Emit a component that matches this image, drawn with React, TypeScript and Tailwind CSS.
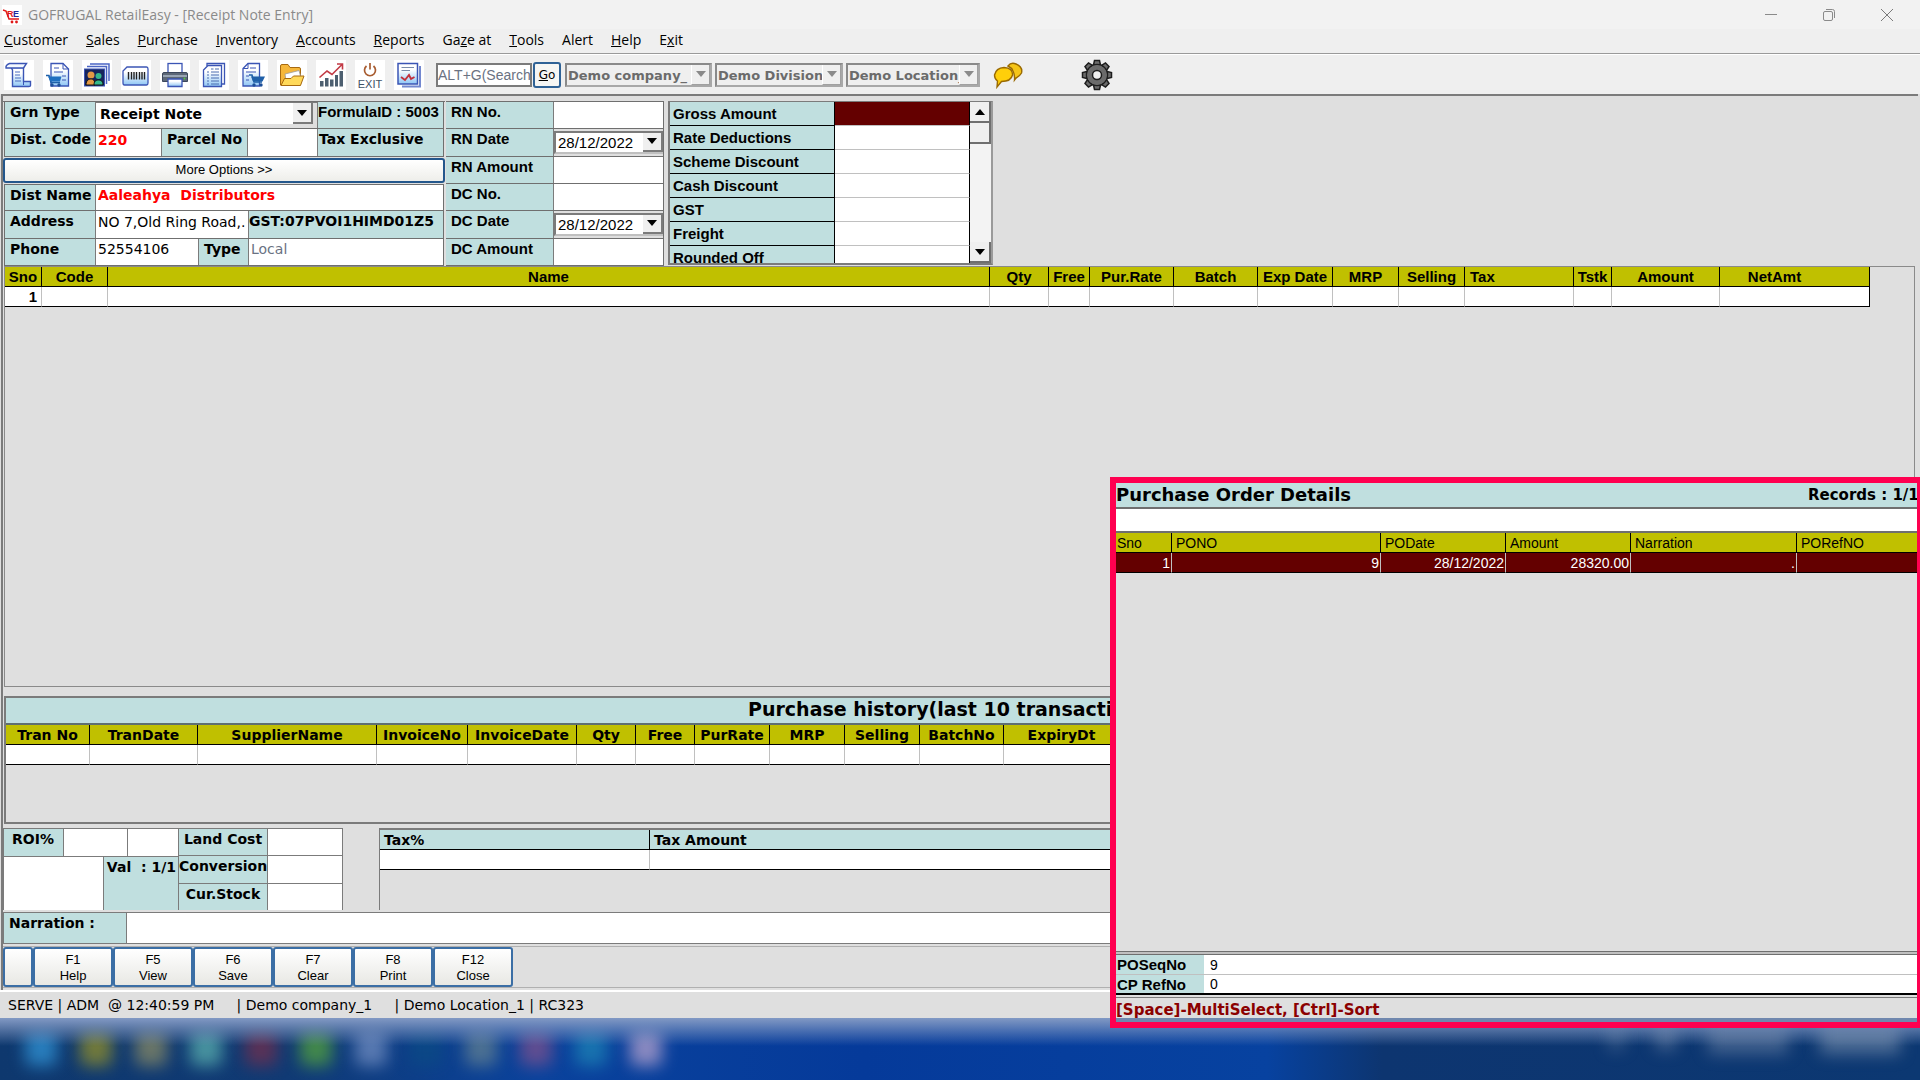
import type { ReactNode } from "react";
import { clsx } from "clsx";

const menuItems = [
  ["", "C", "ustomer"],
  ["", "S", "ales"],
  ["", "P", "urchase"],
  ["", "I", "nventory"],
  ["", "A", "ccounts"],
  ["", "R", "eports"],
  ["Ga", "z", "e at"],
  ["", "T", "ools"],
  ["Alert", "", ""],
  ["", "H", "elp"],
  ["E", "x", "it"],
];

const itemColumns = [
  { name: "Sno", width: "w-[37px]" },
  { name: "Code", width: "w-[66px]" },
  { name: "Name", width: "" },
  { name: "Qty", width: "w-[59px]" },
  { name: "Free", width: "w-[41px]" },
  { name: "Pur.Rate", width: "w-[84px]" },
  { name: "Batch", width: "w-[84px]" },
  { name: "Exp Date", width: "w-[75px]" },
  { name: "MRP", width: "w-[66px]" },
  { name: "Selling", width: "w-[66px]" },
  { name: "Tax", width: "w-[109px]", align: "pl-[5px] text-left" },
  { name: "Tstk", width: "w-[38px]" },
  { name: "Amount", width: "w-[108px]" },
  { name: "NetAmt", width: "w-[150px]", align: "pr-10 text-center" },
];

const historyColumns = [
  { name: "Tran No", width: "w-[84px]" },
  { name: "TranDate", width: "w-[108px]" },
  { name: "SupplierName", width: "w-[179px]" },
  { name: "InvoiceNo", width: "w-[91px]" },
  { name: "InvoiceDate", width: "w-[109px]" },
  { name: "Qty", width: "w-[59px]" },
  { name: "Free", width: "w-[59px]" },
  { name: "PurRate", width: "w-[75px]" },
  { name: "MRP", width: "w-[75px]" },
  { name: "Selling", width: "w-[75px]" },
  { name: "BatchNo", width: "w-[84px]" },
  { name: "ExpiryDt", width: "w-[116px]" },
  { name: "", width: "" },
];

const orderColumns = [
  { name: "Sno", value: "1", width: "w-[56px]" },
  { name: "PONO", value: "9", width: "w-[209px]" },
  { name: "PODate", value: "28/12/2022", width: "w-[125px]" },
  { name: "Amount", value: "28320.00", width: "w-[125px]" },
  { name: "Narration", value: ".", width: "w-[166px]" },
  { name: "PORefNO", value: "", width: "" },
];

const charges = [
  "Gross Amount",
  "Rate Deductions",
  "Scheme Discount",
  "Cash Discount",
  "GST",
  "Freight",
  "Rounded Off",
];

const functionKeys = [
  ["F1", "Help"],
  ["F5", "View"],
  ["F6", "Save"],
  ["F7", "Clear"],
  ["F8", "Print"],
  ["F12", "Close"],
];

const taskbarSpots = [
  "bg-[#2f8fd0]",
  "bg-[#8a8a2e]",
  "bg-[#808566]",
  "bg-[#55a8aa]",
  "bg-[#6b3050]",
  "bg-[#4f9c40]",
  "bg-[#6a88bd]",
  "bg-[#0b4a85]",
  "bg-[#5c7c92]",
  "bg-[#75508e]",
  "bg-[#1c7fb4]",
  "bg-[#aa9cca]",
];

const sans = "font-['Liberation_Sans',Arial,sans-serif]";

function Arrow({ up = false, className = "fill-black" }: { up?: boolean; className?: string }) {
  return (
    <svg viewBox="0 0 10 6" className={clsx("h-[6px] w-[10px]", className)}>
      <path d={up ? "M0 6 L5 0 L10 6Z" : "M0 0 L5 6 L10 0Z"} />
    </svg>
  );
}

function ToolIcon({ label, children }: { label: string; children: ReactNode }) {
  return (
    <button type="button" aria-label={label} className="h-[30px] w-[30px] bg-white">
      <svg viewBox="0 0 30 30" className="h-[30px] w-[30px]">
        {children}
      </svg>
    </button>
  );
}

function Toolbar() {
  return (
    <div className="flex h-10 items-center border-t border-white bg-[#efefef] pl-1">
      <svg className="absolute h-0 w-0">
        <defs>
          <linearGradient id="paper" x1="0" y1="0" x2="0" y2="1">
            <stop offset="0.3" stopColor="#fff" />
            <stop offset="1" stopColor="#8fc6f5" />
          </linearGradient>
        </defs>
      </svg>
      <div className="flex gap-[9px]">
        <ToolIcon label="Bill">
          <path d="M7 7.500H19.500V21.500H26.500V25.500Q26.500 26.500 25 26.500H8.500V10Z" fill="url(#paper)" stroke="#3b55b5" strokeWidth="1.400" />
          <path d="M5.500 3.500H22.500L19.500 8H2Q1.500 5 5.500 3.500Z" fill="#f4f9ff" stroke="#3b55b5" strokeWidth="1.400" />
          <path d="M11 12H16M11 15H16M11 18H17M11 21H17" stroke="#4a6cc0" strokeWidth="1.200" />
          <path d="M19.500 21.500V25" stroke="#3b55b5" />
        </ToolIcon>
        <ToolIcon label="Purchase order">
          <path d="M8 3.500H20L25.500 9V26H8Z" fill="url(#paper)" stroke="#3b55b5" strokeWidth="1.300" />
          <path d="M20 3.500V9H25.500M11 8H16M11 12H20M19 16H23M19 20H23" stroke="#3b55b5" fill="none" />
          <path d="M3 15.500H6L8 22.500H17" stroke="#1d5fa8" strokeWidth="1.500" fill="none" />
          <path d="M5 16.500H18.500L17 21.500H7.500Z" fill="#1f6fc0" />
          <circle cx="9" cy="25" r="1.700" fill="#1d4f98" />
          <circle cx="16" cy="25" r="1.700" fill="#1d4f98" />
        </ToolIcon>
        <ToolIcon label="Customers">
          <path d="M8 4H27V21M5 6.500H24.500V24" fill="none" stroke="#4b65c5" strokeWidth="1.500" />
          <rect x="2.500" y="9" width="20" height="17" fill="#16245c" stroke="#3b55b5" />
          <circle cx="9" cy="15" r="3.500" fill="#e39a45" />
          <path d="M4 25C4 20 7 19 9 19S13 20 13 25Z" fill="#e39a45" stroke="#111" />
          <circle cx="16.500" cy="16" r="3" fill="#35b88c" />
          <path d="M12 25C12 21 14 20 16.500 20S21 21 21 25Z" fill="#35b88c" stroke="#111" />
        </ToolIcon>
        <ToolIcon label="Barcode">
          <path d="M6 7H25.500Q27 7 27 9V23Q27 25 25.500 25H3.500Q2 25 2 23V11Z" fill="url(#paper)" stroke="#3b55b5" strokeWidth="1.300" />
          <path d="M7.500 12V19.500M10.500 12V19.500M13 12V19.500M15.500 12V19.500M18.500 12V19.500M21 12V19.500M23.500 12V19.500" stroke="#222" strokeWidth="1.400" />
        </ToolIcon>
        <ToolIcon label="Print">
          <rect x="8" y="3.500" width="14" height="10" fill="#fff" stroke="#3b55b5" strokeWidth="1.300" />
          <path d="M4 12.500H26Q27.500 12.500 27.500 14V21.500H2.500V14Q2.500 12.500 4 12.500Z" fill="#5d6878" stroke="#3c475c" />
          <path d="M3 16H27" stroke="#a9b5c4" strokeWidth="1.600" />
          <circle cx="24.500" cy="18.500" r="0.900" fill="#52d040" />
          <path d="M8 19H22V26.500H8Z" fill="url(#paper)" stroke="#3b55b5" strokeWidth="1.300" />
        </ToolIcon>
        <ToolIcon label="Documents">
          <path d="M8 6V3.500H25.500V24H23" fill="none" stroke="#3b55b5" strokeWidth="1.300" />
          <path d="M9 5.500H22.500V26.500H4.500V10Z" fill="url(#paper)" stroke="#3b55b5" strokeWidth="1.300" />
          <path d="M12 9H14.500M16 9H20M8 12H10M12 12H20M8 15H10M12 15H20M8 18H10M12 18H20M8 21H10M12 21H20M8 24H10M12 24H20" stroke="#4a6cb0" />
        </ToolIcon>
        <ToolIcon label="Sales order">
          <path d="M10 3.500H21.500V26H5V8.500Z" fill="url(#paper)" stroke="#3b55b5" strokeWidth="1.300" />
          <path d="M10 3.500V8.500H5M12 8H18M8 12H18M8 16H11M8 20H11" stroke="#3b55b5" fill="none" />
          <path d="M11 15H14L16 22H24" stroke="#1d5fa8" strokeWidth="1.500" fill="none" />
          <path d="M13 16.500H27L24.500 21.500H15Z" fill="#1f5fa8" />
          <circle cx="16" cy="25" r="1.700" fill="#1d4f98" />
          <circle cx="23" cy="25" r="1.700" fill="#1d4f98" />
        </ToolIcon>
        <ToolIcon label="Open">
          <path d="M3.500 25V6Q3.500 4.500 5 4.500H11L13 7.500H22Q23.500 7.500 23.500 9V25Z" fill="#f6b73a" stroke="#a86a10" />
          <path d="M8 14L22 10.500L24 18L9 21Z" fill="#fff" stroke="#999" strokeWidth="0.800" />
          <path d="M4 25.500L7.500 18.500H14L16.500 16H27L23.500 25.500Z" fill="#ffd95a" stroke="#a86a10" />
        </ToolIcon>
        <ToolIcon label="Charts">
          <path d="M4 21H7.500V26.500H4ZM9 18H12.500V26.500H9ZM14 19.500H17.500V26.500H14ZM19 15H22V26.500H19ZM23.500 11H27V26.500H23.500Z" fill="#4d5f70" />
          <path d="M3.500 17.500L11 11L16 14.500L26 4.500M21 4H26.500V9.500" fill="none" stroke="#c23a45" strokeWidth="1.600" />
        </ToolIcon>
        <ToolIcon label="Exit">
          <path d="M11.500 6A5.500 5.500 0 1 0 18.500 6M15 3V9.500" fill="none" stroke="#a85c30" strokeWidth="1.700" />
          <text x="15" y="27.500" textAnchor="middle" fontSize="11" fontFamily="Liberation Sans, sans-serif" fill="#3f5266">EXIT</text>
        </ToolIcon>
        <ToolIcon label="Reports">
          <path d="M8 26.500H26V6" fill="none" stroke="#7388d0" strokeWidth="2" />
          <rect x="4" y="3.500" width="19.500" height="20.500" fill="url(#paper)" stroke="#3b55b5" strokeWidth="1.500" />
          <path d="M7.500 7.500H20M7.500 10.500H16" stroke="#7a8cab" />
          <path d="M7 17L11 20L15 15L17 19L20.500 17" fill="none" stroke="#c22f3a" strokeWidth="1.800" />
        </ToolIcon>
      </div>

      <input
        aria-label="Search"
        defaultValue="ALT+G(Search"
        className={clsx(sans, "ml-[12px] h-6 w-[96px] border-2 border-[#7b7b7b] bg-white text-sm text-gray-500")}
      />
      <button type="button" className="ml-px h-[26px] w-[28px] rounded-[3px] border-2 border-[#2f6296] bg-[#f6f6f4] text-xs text-black">
        <u>G</u>o
      </button>
      <div className="ml-1 flex gap-[3px]">
        <ToolSelect label="Company" value="Demo company_" width="w-[147px]" />
        <ToolSelect label="Division" value="Demo Division_" width="w-[128px]" />
        <ToolSelect label="Location" value="Demo Location_" width="w-[134px]" />
      </div>

      <button type="button" aria-label="Chat" className="ml-3">
        <svg viewBox="0 0 32 28" className="h-7 w-8">
          <path d="M16 5Q19 1 24 3Q31 6 29.500 12Q28 15 24 17L22.500 19Q23 14 21 10Q20 7 16 5Z" fill="#f5c518" stroke="#9a6a00" strokeWidth="1.400" />
          <path d="M2.500 14Q4 7 12 6.500Q21 7 20.500 14Q19 20.500 9.500 20.500L5 26L5.500 20Q2.500 18 2.500 14Z" fill="#ffcf0a" stroke="#9a6a00" strokeWidth="1.400" />
        </svg>
      </button>
      <button type="button" aria-label="Settings" className="ml-[57px]">
        <svg viewBox="0 0 32 32" className="h-8 w-8">
          <g fill="#6b6b6b" stroke="#1d1d1d" strokeWidth="1.500">
            {[0, 45, 90, 135, 180, 225, 270, 315].map((a) => (
              <path key={a} d="M12.500 6L13.500 1.500H18.500L19.500 6Z" transform={`rotate(${a} 16 16)`} />
            ))}
            <circle cx="16" cy="16" r="10.500" />
          </g>
          <circle cx="16" cy="16" r="9.900" fill="#6b6b6b" />
          <circle cx="16" cy="16" r="4.500" fill="#efefef" stroke="#1d1d1d" strokeWidth="1.500" />
        </svg>
      </button>
    </div>
  );
}

function ToolSelect({ label, value, width }: { label: string; value: string; width: string }) {
  return (
    <div className={clsx("relative h-6 border-2 border-[#8a8a8a] border-r-[#a8a8a8] border-b-[#a8a8a8] bg-[#efefef]", width)}>
      <select aria-label={label} className="h-full w-full appearance-none pr-4 pl-px text-[13px] leading-5 font-bold text-clip text-[#6b6b6b]">
        <option>{value}</option>
      </select>
      <span className="pointer-events-none absolute inset-y-0 right-0 flex w-[19px] items-center justify-center border-r border-b border-l border-[#a0a0a0] border-l-white bg-[#efefef]">
        <Arrow className="fill-[#8a8a8a]" />
      </span>
    </div>
  );
}

function Label({ htmlFor, className, children }: { htmlFor?: string; className?: string; children: ReactNode }) {
  return (
    <label htmlFor={htmlFor} className={clsx("shrink-0 overflow-hidden bg-[#c0dfdf] leading-5 font-bold whitespace-nowrap", className)}>
      {children}
    </label>
  );
}

function Field({ id, value, className }: { id: string; value?: string; className?: string }) {
  return <input id={id} defaultValue={value} className={clsx("min-w-0 bg-white px-[2px] pb-[5px]", className)} />;
}

function DateField({ id }: { id: string }) {
  return (
    <div className="flex min-w-0 flex-1 items-center bg-[#dfdfdf]">
      <div className="flex h-[23px] min-w-0 flex-1 border-2 border-r-0 border-[#7b7b7b] border-b-[#c0c0c0] bg-white">
        <input id={id} defaultValue="28/12/2022" className={clsx(sans, "min-w-0 flex-1 px-[2px] text-[15px]")} />
        <button type="button" aria-label="Open calendar" className="flex w-5 shrink-0 items-center justify-center border-r-2 border-b-2 border-[#7b7b7b] bg-[#efefef]">
          <Arrow />
        </button>
      </div>
    </div>
  );
}

function SupplierForm() {
  const row = "flex min-h-0 gap-px border-b border-[#6f6f6f] bg-[#7b7b7b] border-x mx-px";
  return (
    <div className="grid h-[165px] w-[442px] grid-cols-1 grid-rows-6 border-t border-[#6f6f6f]">
      <div className={row}>
        <Label htmlFor="grn" className="w-[90px] pl-[5px]">Grn Type</Label>
        <div className="relative flex-1 border-t border-[#7b7b7b] bg-[#dfdfdf] pr-1 pb-1">
          <select id="grn" className="h-full w-full appearance-none bg-white px-1 font-bold">
            <option>Receipt Note</option>
          </select>
          <span className="pointer-events-none absolute top-0 right-1 bottom-1 flex w-5 items-center justify-center border-r-2 border-b-2 border-[#7b7b7b] bg-[#efefef]">
            <Arrow />
          </span>
        </div>
        <Label className={clsx(sans, "w-[125px] text-[15px]")}>FormulaID : 5003</Label>
      </div>
      <div className={row}>
        <Label htmlFor="code" className="w-[90px] pl-[5px]">Dist. Code</Label>
        <Field id="code" value="220" className="w-[65px] font-bold text-[#ff0000]" />
        <Label htmlFor="parcel" className="w-[85px] pl-[5px]">Parcel No</Label>
        <Field id="parcel" className="flex-1" />
        <Label className="w-[125px] pl-px">Tax Exclusive</Label>
      </div>
      <div className="py-px">
        <button type="button" className={clsx(sans, "block h-full w-full rounded-[3px] border-2 border-[#24578c] bg-linear-to-b from-white to-[#eeeeea] text-[13px]")}>
          More Options &gt;&gt;
        </button>
      </div>
      <div className={clsx(row, "border-t")}>
        <Label htmlFor="distname" className="w-[90px] pl-[5px]">Dist Name</Label>
        <Field id="distname" value="Aaleahya  Distributors" className="flex-1 font-bold text-[#ff0000]" />
      </div>
      <div className={row}>
        <Label htmlFor="address" className="w-[90px] pl-[5px]">Address</Label>
        <Field id="address" value="NO 7,Old Ring Road,." className="flex-1" />
        <Label className="w-[194px]">GST:07PVOI1HIMD01Z5</Label>
      </div>
      <div className={row}>
        <Label htmlFor="phone" className="w-[90px] pl-[5px]">Phone</Label>
        <Field id="phone" value="52554106" className="flex-1" />
        <Label htmlFor="type" className="w-[49px] pl-[5px]">Type</Label>
        <Field id="type" value="Local" className="w-[194px] text-gray-500" />
      </div>
    </div>
  );
}

function ReceiptForm() {
  const rows = [
    { id: "rnno", label: "RN No." },
    { id: "rndate", label: "RN Date", date: true },
    { id: "rnamount", label: "RN Amount" },
    { id: "dcno", label: "DC No." },
    { id: "dcdate", label: "DC Date", date: true },
    { id: "dcamount", label: "DC Amount" },
  ];
  return (
    <div className="ml-px grid h-[165px] w-[218px] grid-cols-1 grid-rows-6 border-t border-r border-[#6f6f6f]">
      {rows.map((r) => (
        <div key={r.id} className="flex min-h-0 gap-px border-b border-[#6f6f6f] bg-[#7b7b7b]">
          <Label htmlFor={r.id} className={clsx(sans, "w-[107px] pl-[5px] text-[15px]")}>{r.label}</Label>
          {r.date ? <DateField id={r.id} /> : <Field id={r.id} className="flex-1" />}
        </div>
      ))}
    </div>
  );
}

function ChargesGrid() {
  return (
    <div className="ml-1 flex h-[164px] w-[325px] overflow-hidden border-2 border-t border-[#7b7b7b] border-r-[#9a9a9a]">
      <table className={clsx(sans, "flex-1 border-separate border-spacing-0 text-[15px] leading-5")}>
        <tbody>
          {charges.map((name, i) => (
            <tr key={name}>
              <th scope="row" className="h-6 w-[165px] border-r border-b border-black bg-[#c0dfdf] px-[3px] py-0 text-left">
                {name}
              </th>
              <td className={clsx("h-6 border-r border-b border-b-[#c0c0c0]", i === 0 ? "bg-[#640000]" : "bg-white")} />
            </tr>
          ))}
        </tbody>
      </table>
      <div className="flex w-[21px] flex-col bg-[#f3f3f3]">
        <button type="button" aria-label="Scroll up" className="flex h-[21px] items-center justify-center border-r-2 border-b-2 border-[#6f6f6f] bg-[#efefef]">
          <Arrow up />
        </button>
        <div className="h-[21px] border-r-2 border-b-2 border-[#6f6f6f] bg-[#efefef]" />
        <button type="button" aria-label="Scroll down" className="mt-auto flex h-[21px] items-center justify-center border-r-2 border-b-2 border-[#6f6f6f] bg-[#efefef]">
          <Arrow />
        </button>
      </div>
    </div>
  );
}

function ItemGrid() {
  return (
    <div className="mr-[3px] ml-px min-h-0 flex-1 border border-[#8a8a8a] pr-[44px]">
      <table className={clsx(sans, "w-full table-fixed border-separate border-spacing-0 text-[15px] leading-[18px] font-bold")}>
        <thead>
          <tr>
            {itemColumns.map((c) => (
              <th key={c.name} className={clsx("h-5 border-r border-b border-black bg-[#c0c000] p-0 whitespace-nowrap", c.width, c.align)}>
                {c.name}
              </th>
            ))}
          </tr>
        </thead>
        <tbody>
          <tr>
            {itemColumns.map((c, i) => (
              <td
                key={c.name}
                className="h-5 border-r border-b border-r-[#c0c0c0] border-b-black bg-white p-0 pr-1 text-right last:border-r-black"
              >
                {i === 0 ? "1" : ""}
              </td>
            ))}
          </tr>
        </tbody>
      </table>
    </div>
  );
}

function History() {
  return (
    <div className="mt-[9px] mr-[3px] ml-px h-[128px] border-2 border-[#7b7b7b]">
      <h2 className="h-[27px] border-b-2 border-[#5f6f6f] bg-[#c0dfdf] pr-3 text-center text-[19px] leading-[22px] font-bold">
        Purchase history(last 10 transactions)
      </h2>
      <table className="w-full table-fixed border-separate border-spacing-0 text-sm leading-[18px]">
        <thead>
          <tr>
            {historyColumns.map((c) => (
              <th key={c.name} className={clsx("h-5 border-r border-b border-black bg-[#c0c000] p-0", c.width)}>
                {c.name}
              </th>
            ))}
          </tr>
        </thead>
        <tbody>
          <tr>
            {historyColumns.map((c) => (
              <td key={c.name} className="h-5 border-r border-b border-r-[#c0c0c0] border-b-black bg-white p-0" />
            ))}
          </tr>
        </tbody>
      </table>
    </div>
  );
}

function StockPanel() {
  return (
    <div className="mt-1 mr-[3px] mb-px flex h-[82px]">
      <div className="grid w-[340px] grid-cols-[174px_minmax(0,1fr)] border-x border-t border-[#7b7b7b] bg-[#7b7b7b]">
        <div className="flex flex-col gap-px">
          <div className="flex h-[27px] gap-px">
            <Label htmlFor="roi" className="w-[59px] pl-2">ROI%</Label>
            <Field id="roi" className="flex-1" />
            <input aria-label="ROI amount" className="w-[50px] bg-white" />
          </div>
          <div className="flex min-h-0 flex-1 gap-px">
            <div className="flex-1 bg-white" />
            <Label className="w-[74px] pr-[2px] text-right">Val&nbsp; : 1/1</Label>
          </div>
        </div>
        <div className="ml-px grid grid-cols-1 grid-rows-3 gap-px">
          {["Land Cost", "Conversion", "Cur.Stock"].map((name) => (
            <div key={name} className="flex min-h-0 gap-px">
              <Label htmlFor={name} className="w-[88px] text-center">{name}</Label>
              <Field id={name} className="flex-1" />
            </div>
          ))}
        </div>
      </div>
      <div className="ml-9 min-w-0 flex-1 border-t-2 border-l border-[#7b7b7b]">
        <table className="w-full table-fixed border-separate border-spacing-0 text-sm leading-[18px]">
          <thead>
            <tr>
              <th className="h-5 w-[270px] border-r border-b border-black bg-[#c0dfdf] px-1 py-0 text-left">Tax%</th>
              <th className="h-5 border-b border-black bg-[#c0dfdf] px-1 py-0 text-left">Tax Amount</th>
            </tr>
          </thead>
          <tbody>
            <tr>
              <td className="h-5 border-r border-b border-r-[#c0c0c0] border-b-black bg-white p-0" />
              <td className="h-5 border-b border-black bg-white p-0" />
            </tr>
          </tbody>
        </table>
      </div>
    </div>
  );
}

function PurchaseOrders() {
  return (
    <section className="absolute right-0 bottom-[52px] flex h-[551px] w-[810px] flex-col border-[6px] border-r-[3px] border-[#ff0050] bg-[#dfdfdf]">
      <div className="flex h-[26px] justify-between border-b-2 border-[#6f6f6f] bg-[#c0dfdf] leading-6 font-bold">
        <h2 className="text-lg leading-6">Purchase Order Details</h2>
        <span className="w-[109px] overflow-hidden text-[15px] whitespace-nowrap">Records : 1/1</span>
      </div>
      <input aria-label="Find order" className="h-6 border-b-2 border-[#6f6f6f] bg-white px-1" />
      <table className={clsx(sans, "w-full table-fixed border-separate border-spacing-0 text-sm leading-[18px]")}>
        <thead>
          <tr>
            {orderColumns.map((c) => (
              <th key={c.name} className={clsx("h-5 border-r border-b border-black bg-[#c0c000] px-1 py-0 text-left font-normal first:pl-px last:border-r-0", c.width)}>
                {c.name}
              </th>
            ))}
          </tr>
        </thead>
        <tbody>
          <tr>
            {orderColumns.map((c) => (
              <td key={c.name} className="h-5 border-r border-b border-r-[#c0c0c0] border-b-black bg-[#640000] p-0 pr-px text-right text-white last:border-r-0">
                {c.value}
              </td>
            ))}
          </tr>
        </tbody>
      </table>
      <div className="mt-auto border-t-4 border-double border-[#6f6f6f] bg-[#c0c0c0]">
        {[["POSeqNo", "9"], ["CP RefNo", "0"]].map(([name, value]) => (
          <div key={name} className={clsx(sans, "flex h-5 border-b border-[#c0c0c0] last:border-b-2 last:border-black")}>
            <label htmlFor={name} className="w-[88px] bg-[#c0dfdf] pl-px text-[15px] leading-5 font-bold">{name}</label>
            <input id={name} defaultValue={value} className="flex-1 bg-white px-[6px] text-sm" />
          </div>
        ))}
      </div>
      <p className="mt-[2px] h-[21px] border-t border-[#7b7b7b] text-[15px] leading-6 font-bold text-[#8b0000]">
        [Space]-MultiSelect, [Ctrl]-Sort
      </p>
      <div className="h-1 bg-[#7088ae]" />
    </section>
  );
}

export default function App() {
  return (
    <div className="relative flex h-screen flex-col overflow-hidden bg-[#dfdfdf] font-['DejaVu_Sans',Verdana,sans-serif] text-sm text-black">
      {/* Title bar */}
      <header className="flex h-[29px] items-center bg-[#f2f2f2] pl-[2px] font-['Open_Sans',sans-serif] text-[#8a8a8a]">
        <svg viewBox="0 0 20 20" className="h-5 w-5 bg-white">
          <path d="M1 5L4 6L7 14H17" fill="none" stroke="#e01818" strokeWidth="1.500" />
          <text x="5" y="12" fontSize="9" fontWeight="bold" fontFamily="Liberation Sans, sans-serif" fill="#e01818">R</text>
          <text x="11" y="12" fontSize="9" fontWeight="bold" fontFamily="Liberation Sans, sans-serif" fill="#1c2a9c">E</text>
          <circle cx="10" cy="17" r="1.400" fill="#e01818" />
          <circle cx="14.500" cy="17" r="1.400" fill="#e01818" />
        </svg>
        <h1 className="ml-[6px] flex-1">GOFRUGAL RetailEasy - [Receipt Note Entry]</h1>
        <div className="mr-1 flex">
          <button type="button" aria-label="Minimize" className="flex w-[58px] justify-center">
            <svg viewBox="0 0 12 12" className="h-3 w-3" stroke="#8a8a8a"><path d="M0 5.500H12" /></svg>
          </button>
          <button type="button" aria-label="Restore" className="flex w-[58px] justify-center">
            <svg viewBox="0 0 12 12" className="h-3 w-3" fill="none" stroke="#8a8a8a">
              <rect x="0.500" y="2.500" width="9" height="9" rx="1.500" />
              <path d="M3 0.500H9.500Q11.500 0.500 11.500 2.500V9" />
            </svg>
          </button>
          <button type="button" aria-label="Close window" className="flex w-[58px] justify-center">
            <svg viewBox="0 0 12 12" className="h-3 w-3" stroke="#7a7a7a"><path d="M0 0L12 12M12 0L0 12" /></svg>
          </button>
        </div>
      </header>

      {/* Menu */}
      <nav className="flex h-[25px] gap-[18px] border-b border-[#9a9a9a] bg-[#efefef] pl-1 font-['Open_Sans',sans-serif] leading-[22px]">
        {menuItems.map(([before, key, after]) => (
          <button type="button" key={before + key + after} className="h-[22px]">
            {before}
            <u>{key}</u>
            {after}
          </button>
        ))}
      </nav>

      <Toolbar />

      <main className="mr-[2px] ml-px flex min-h-0 flex-1 flex-col border-t-2 border-l-2 border-[#7b7b7b] pt-[5px]">
        <form className="flex">
          <SupplierForm />
          <ReceiptForm />
          <ChargesGrid />
        </form>
        <ItemGrid />
        <History />
        <StockPanel />
        <div className="mt-px mr-[3px] flex h-8 gap-px border border-[#7b7b7b] bg-[#7b7b7b]">
          <Label htmlFor="narration" className="w-[122px] pl-[5px]">Narration :</Label>
          <Field id="narration" className="flex-1" />
        </div>
        <div className={clsx(sans, "mt-[2px] mb-[2px] flex h-[42px] border-y border-[#b0b0b0]")}>
          <button type="button" aria-label="Blank" className="w-[30px] rounded-[3px] border-2 border-[#3b6ea5] bg-linear-to-b from-white to-[#e8e8e4]" />
          {functionKeys.map(([key, name]) => (
            <button type="button" key={key} className="w-20 rounded-[3px] border-2 border-[#3b6ea5] bg-linear-to-b from-white to-[#e8e8e4] pt-px text-[13px] leading-4">
              {key}
              <br />
              {name}
            </button>
          ))}
        </div>
      </main>

      <footer className="h-7 border-t-2 border-white pl-2 leading-[26px] whitespace-pre">
        SERVE | ADM  @ 12:40:59 PM     | Demo company_1     | Demo Location_1 | RC323
      </footer>

      {/* Taskbar */}
      <div className="relative h-[62px] overflow-hidden bg-[linear-gradient(to_right,#0e386e,#103a74_15%,#0a429c_28%,#053a9a_45%,#0742a0_66%,#0d3570_72%,#0c3872_100%)]">
        <div className="flex gap-[23px] pt-3 pl-[25px]">
          {taskbarSpots.map((color) => (
            <span key={color} className={clsx("h-9 w-8 rounded-md opacity-80 blur-[8px]", color)} />
          ))}
        </div>
        <div className="absolute inset-x-0 top-0 h-7 bg-linear-to-b from-[#8299c4] to-transparent" />
        <div className="absolute top-2 right-5 flex gap-8">
          <span className="h-6 w-4 bg-slate-400/30 blur-[8px]" />
          <span className="h-6 w-5 bg-slate-400/40 blur-[8px]" />
          <span className="h-7 w-20 bg-slate-400/40 blur-[8px]" />
          <span className="h-7 w-20 bg-slate-400/50 blur-[8px]" />
        </div>
      </div>

      <PurchaseOrders />
    </div>
  );
}
